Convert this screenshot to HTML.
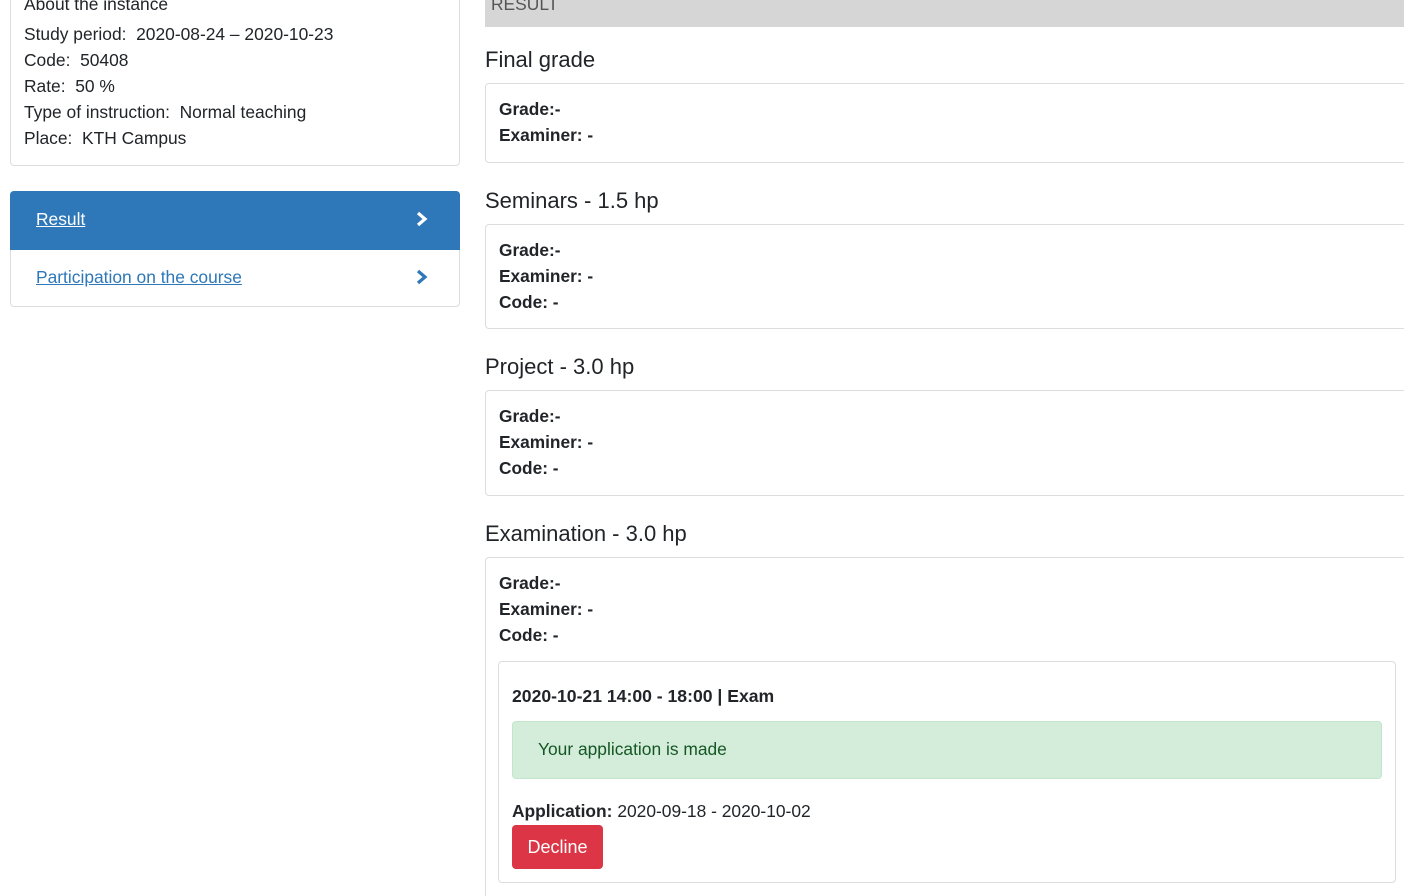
<!DOCTYPE html>
<html style="overflow:hidden;height:896px"><head><style>
*{margin:0;padding:0;box-sizing:border-box}
html,body{width:1404px;height:896px;overflow:hidden}
body{background:#fff;font-family:"Liberation Sans",Arial,sans-serif;color:#212529;position:relative}
.a{position:absolute;white-space:nowrap;line-height:1}
.t{font-size:17.4px}
.h{font-size:22px}
.b{font-size:17.3px;font-weight:bold}
.box{position:absolute;border:1px solid #ddd;border-radius:4px;background:#fff}
</style></head><body>
<div class="box" style="left:10px;top:-20px;width:450px;height:186px"></div>
<div class="a t" style="left:24px;top:-4px">About the instance</div>
<div class="a t" style="left:24px;top:26px">Study period:&nbsp; 2020-08-24 – 2020-10-23</div>
<div class="a t" style="left:24px;top:52px">Code:&nbsp; 50408</div>
<div class="a t" style="left:24px;top:78px">Rate:&nbsp; 50 %</div>
<div class="a t" style="left:24px;top:104px">Type of instruction:&nbsp; Normal teaching</div>
<div class="a t" style="left:24px;top:130px">Place:&nbsp; KTH Campus</div>

<div class="box" style="left:10px;top:191px;width:450px;height:116px"></div>
<div style="position:absolute;left:10px;top:191px;width:450px;height:59px;background:#2e77b8;border-radius:4px 4px 0 0"></div>
<div class="a t" style="left:36px;top:211px;color:#fff;text-decoration:underline">Result</div>
<svg style="position:absolute;left:415px;top:210px" width="14" height="18"><path d="M3 3l7 6-7 6" stroke="#fff" stroke-width="3.2" fill="none"/></svg>
<div class="a t" style="left:36px;top:269px;color:#2e77b8;text-decoration:underline">Participation on the course</div>
<svg style="position:absolute;left:415px;top:268px" width="14" height="18"><path d="M3 3l7 6-7 6" stroke="#2e77b8" stroke-width="3.2" fill="none"/></svg>

<div style="position:absolute;left:485px;top:0;width:919px;height:27px;background:#d6d6d6"></div>
<div class="a t" style="left:491px;top:-4px;color:#555">RESULT</div>

<div class="a h" style="left:485px;top:49px">Final grade</div>
<div class="box" style="left:485px;top:83px;width:930px;height:80px"></div>
<div class="a b" style="left:499px;top:101px">Grade:-</div>
<div class="a b" style="left:499px;top:127px">Examiner: -</div>

<div class="a h" style="left:485px;top:190px">Seminars - 1.5 hp</div>
<div class="box" style="left:485px;top:224px;width:930px;height:105px"></div>
<div class="a b" style="left:499px;top:242px">Grade:-</div>
<div class="a b" style="left:499px;top:268px">Examiner: -</div>
<div class="a b" style="left:499px;top:294px">Code: -</div>

<div class="a h" style="left:485px;top:356px">Project - 3.0 hp</div>
<div class="box" style="left:485px;top:390px;width:930px;height:106px"></div>
<div class="a b" style="left:499px;top:408px">Grade:-</div>
<div class="a b" style="left:499px;top:434px">Examiner: -</div>
<div class="a b" style="left:499px;top:460px">Code: -</div>

<div class="a h" style="left:485px;top:523px">Examination - 3.0 hp</div>
<div class="box" style="left:485px;top:557px;width:930px;height:360px"></div>
<div class="a b" style="left:499px;top:575px">Grade:-</div>
<div class="a b" style="left:499px;top:601px">Examiner: -</div>
<div class="a b" style="left:499px;top:627px">Code: -</div>

<div class="box" style="left:498px;top:661px;width:898px;height:222px"></div>
<div class="a b" style="left:512px;top:688px;font-size:17.6px">2020-10-21 14:00 - 18:00 | Exam</div>
<div style="position:absolute;left:512px;top:721px;width:870px;height:58px;background:#d4edda;border:1px solid #c3e6cb;border-radius:4px"></div>
<div class="a t" style="left:538px;top:741px;color:#155724">Your application is made</div>
<div class="a t" style="left:512px;top:803px"><b>Application:</b> 2020-09-18 - 2020-10-02</div>
<div style="position:absolute;left:512px;top:825px;width:91px;height:44px;background:#dc3545;border-radius:4px;color:#fff;font-size:18px;line-height:44px;text-align:center">Decline</div>
</body></html>
